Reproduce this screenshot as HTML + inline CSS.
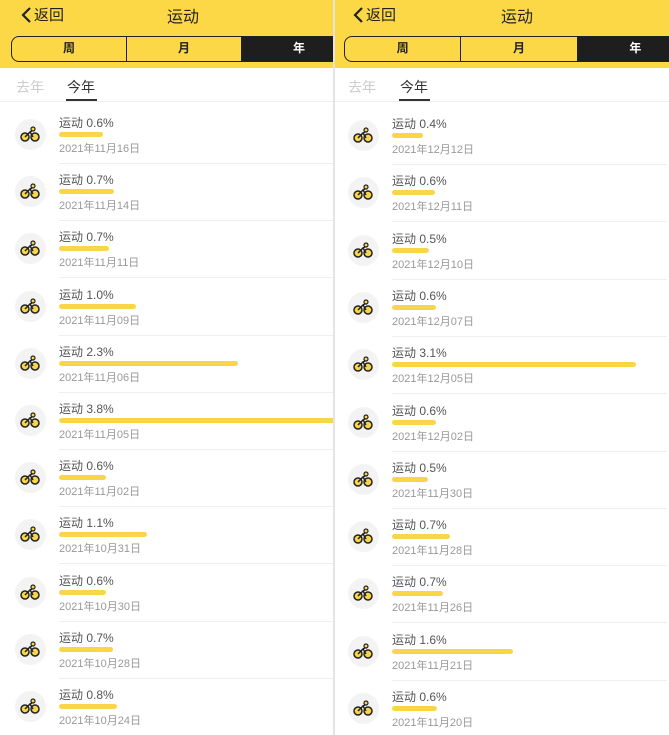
<!DOCTYPE html><html><head><meta charset="utf-8"><style>
*{margin:0;padding:0;box-sizing:border-box}
body{width:669px;height:735px;background:#fff;position:relative;overflow:hidden;font-family:"Liberation Sans","Noto Sans CJK SC",sans-serif}
.p{position:absolute;top:0;height:735px;overflow:hidden;background:#fff}
.hd{position:absolute;left:0;top:0;width:100%;height:68px;background:#fcd846}
.back{position:absolute;left:20px;top:4px;font-size:15px;color:#222}
.back svg{vertical-align:-3px;margin-right:2px}
.tt{position:absolute;top:3px;font-size:16px;color:#222}
.seg{position:absolute;top:36px;height:26px;border:1.5px solid #222;border-radius:8px;display:flex;overflow:hidden;font-size:12px;color:#222;font-weight:bold}
.seg div{flex:1;text-align:center;line-height:23px}
.seg div+div{border-left:1px solid #222}
.seg .on{background:#1e1e1e;color:#fff}
.tab{position:absolute;top:77px;font-size:14px}
.ul{position:absolute;top:99px;height:2px;width:31px;background:#333}
.sh{position:absolute;top:101px;left:0;width:100%;height:1px;background:#eee}
.r{position:absolute;left:0;width:100%;height:57px}
.r .ic{position:absolute;left:15px;top:12px;width:31px;height:31px;border-radius:50%;background:#f3f3f3}
.r .ic svg{position:absolute;left:5px;top:6px}
.r .t{position:absolute;left:59px;top:7px;font-size:12px;color:#555}
.r .b{position:absolute;left:59px;top:25px;height:5px;border-radius:3px;background:#f9d648}
.r .d{position:absolute;left:59px;top:33px;font-size:11px;color:#999}
.r .ln{position:absolute;left:59px;right:0;bottom:0;height:1px;background:#eee}
#R .r{left:-2px}
</style></head><body>
<div class="p" style="left:0;width:333px">
<div class="hd"></div>
<div class="back"><svg width="12" height="16" viewBox="0 0 12 16"><path d="M10 1 L3 8 L10 15" stroke="#222" stroke-width="2.2" fill="none"/></svg>返回</div>
<div class="tt" style="left:167px">运动</div>
<div class="seg" style="left:11px;width:346px"><div>周</div><div>月</div><div class="on">年</div></div>
<div class="tab" style="left:16px;color:#ccc">去年</div>
<div class="tab" style="left:67px;color:#333">今年</div>
<div class="ul" style="left:66px"></div><div class="sh"></div>
<div id="L"></div>
</div>
<div style="position:absolute;left:333px;top:0;width:2px;height:735px;background:#e4e4e4"></div>
<div class="p" style="left:335px;width:334px">
<div class="hd"></div>
<div class="back" style="left:17px"><svg width="12" height="16" viewBox="0 0 12 16"><path d="M10 1 L3 8 L10 15" stroke="#222" stroke-width="2.2" fill="none"/></svg>返回</div>
<div class="tt" style="left:166px">运动</div>
<div class="seg" style="left:9px;width:350px"><div>周</div><div>月</div><div class="on">年</div></div>
<div class="tab" style="left:13px;color:#ccc">去年</div>
<div class="tab" style="left:65px;color:#333">今年</div>
<div class="ul" style="left:64px"></div><div class="sh"></div>
<div id="R"></div>
</div>
<script>
var ic='<svg width="20" height="18" viewBox="0 0 20 18"><circle cx="5" cy="12" r="4" fill="#f9d648" stroke="#222" stroke-width="1.5"/><circle cx="15" cy="12" r="4" fill="#f9d648" stroke="#222" stroke-width="1.5"/><circle cx="13" cy="4" r="2" fill="#f9d648" stroke="#222" stroke-width="1.2"/><path d="M5 12 L10 7 L13 12 M10 7 L12 6" stroke="#222" stroke-width="1.5" fill="none"/></svg>';
function f(id,base,step,data){var h='';data.forEach(function(d,i){h+='<div class="r" style="top:'+(base+i*step)+'px"><div class="ic">'+ic+'</div><div class="t">运动 '+d[0]+'</div><div class="b" style="width:'+d[1]+'px"></div><div class="d">'+d[2]+'</div><div class="ln"></div></div>';});document.getElementById(id).innerHTML=h;}
f('L',107,57.2,[['0.6%',44,'2021年11月16日'],['0.7%',55,'2021年11月14日'],['0.7%',50,'2021年11月11日'],['1.0%',77,'2021年11月09日'],['2.3%',179,'2021年11月06日'],['3.8%',280,'2021年11月05日'],['0.6%',47,'2021年11月02日'],['1.1%',88,'2021年10月31日'],['0.6%',47,'2021年10月30日'],['0.7%',54,'2021年10月28日'],['0.8%',58,'2021年10月24日']]);
f('R',108,57.3,[['0.4%',31,'2021年12月12日'],['0.6%',43,'2021年12月11日'],['0.5%',37,'2021年12月10日'],['0.6%',44,'2021年12月07日'],['3.1%',244,'2021年12月05日'],['0.6%',44,'2021年12月02日'],['0.5%',36,'2021年11月30日'],['0.7%',58,'2021年11月28日'],['0.7%',51,'2021年11月26日'],['1.6%',121,'2021年11月21日'],['0.6%',45,'2021年11月20日']]);
</script>
</body></html>
